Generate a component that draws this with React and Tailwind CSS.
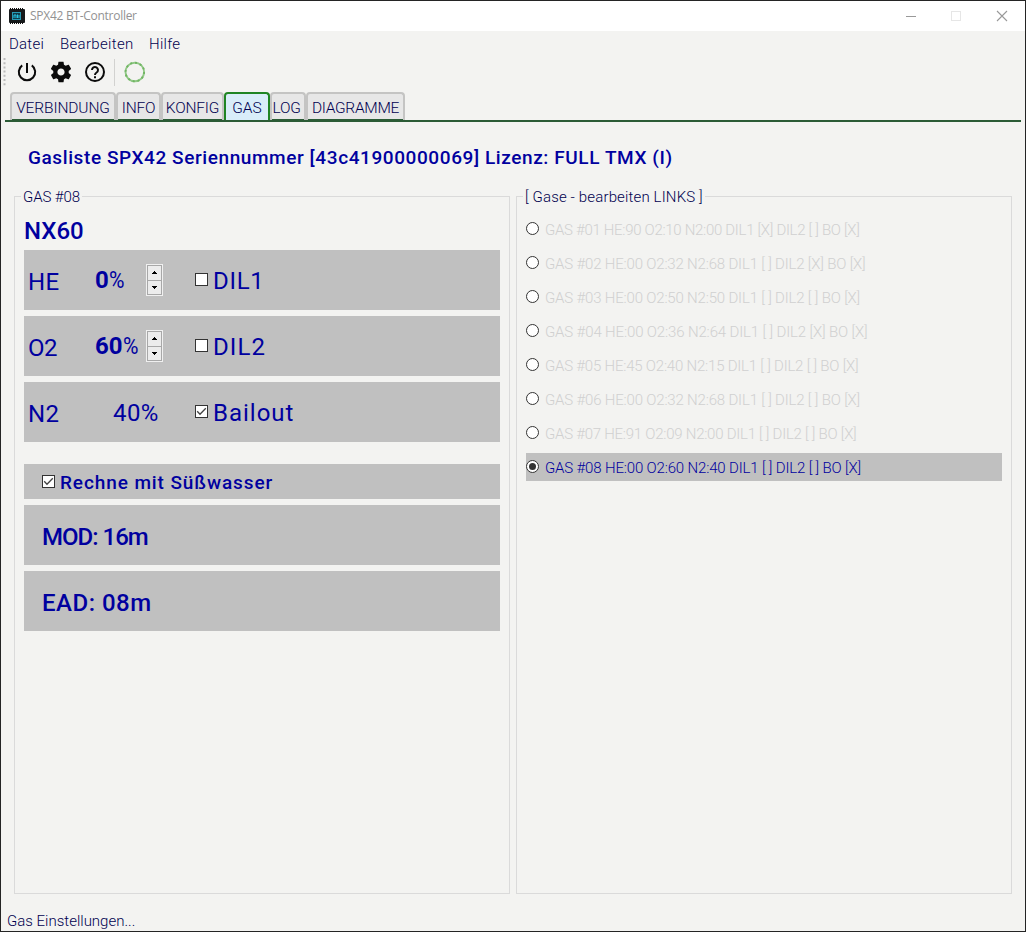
import React from 'react';

const gases = [
  ['GAS #01 HE:90 O2:10 N2:00 DIL1 [X] DIL2 [ ] BO [X]', 'tracking-[-0.3px]'],
  ['GAS #02 HE:00 O2:32 N2:68 DIL1 [ ] DIL2 [X] BO [X]', 'tracking-[-0.18px]'],
  ['GAS #03 HE:00 O2:50 N2:50 DIL1 [ ] DIL2 [ ] BO [X]', 'tracking-[-0.18px]'],
  ['GAS #04 HE:00 O2:36 N2:64 DIL1 [ ] DIL2 [X] BO [X]', 'tracking-[-0.14px]'],
  ['GAS #05 HE:45 O2:40 N2:15 DIL1 [ ] DIL2 [ ] BO [X]', 'tracking-[-0.21px]'],
  ['GAS #06 HE:00 O2:32 N2:68 DIL1 [ ] DIL2 [ ] BO [X]', 'tracking-[-0.18px]'],
  ['GAS #07 HE:91 O2:09 N2:00 DIL1 [ ] DIL2 [ ] BO [X]', 'tracking-[-0.25px]'],
  ['GAS #08 HE:00 O2:60 N2:40 DIL1 [ ] DIL2 [ ] BO [X]', 'tracking-[-0.16px]'],
];

const tabs = [
  ['VERBINDUNG', 'w-[106px]', 'tracking-[-0.12px]'],
  ['INFO', 'w-[45px]', 'tracking-[-0.2px]'],
  ['KONFIG', 'w-[63px]', 'tracking-[-0.2px]'],
  ['GAS', 'w-[46px]', 'tracking-[0px]'],
  ['LOG', 'w-[36px] pr-[3px]', 'tracking-[-0.3px]'],
  ['DIAGRAMME', 'w-[99px]', 'tracking-[-0.3px]'],
];

function Check({ on }) {
  return (
    <svg className="block h-[13px] w-[13px] shrink-0" viewBox="0 0 13 13">
      <rect x="0.5" y="0.5" width="12" height="12" fill="#fff" stroke="#333" />
      {on && <path d="M2.2 6.2 5 9.2 10.8 3.2" fill="none" stroke="#444" strokeWidth="1.3" />}
    </svg>
  );
}

function Radio({ on }) {
  return (
    <svg className="mt-[7px] block h-[13px] w-[13px] shrink-0" viewBox="0 0 13 13">
      <circle cx="6.5" cy="6.5" r="6" fill="#fff" stroke="#333" />
      {on && <circle cx="6.5" cy="6.5" r="3.5" fill="#333" />}
    </svg>
  );
}

function Spinner() {
  return (
    <svg className="block h-8 w-[17px]" viewBox="0 0 17 32">
      <rect width="17" height="32" fill="#f0f0f0" />
      <rect x="1.5" y="1.5" width="14" height="29" fill="#ececec" stroke="#a8a8a8" />
      <path d="M1 16.5H16" stroke="#a8a8a8" />
      <path d="M6 10V9H7V8H8V7H9V8H10V9H11V10Z M6 22H11V23H10V24H9V25H8V24H7V23H6Z" fill="#000" />
    </svg>
  );
}

function Group({ title, tracking, children }) {
  return (
    <fieldset className="h-[706px] w-[496px] min-w-0 border border-[#dadada] px-[9px]">
      <legend className={`-ml-[3px] h-4 px-0.5 text-[15px] leading-[18px] font-light whitespace-nowrap text-[#00004f] ${tracking}`}>{title}</legend>
      {children}
    </fieldset>
  );
}

function GasRow({ name, nameTracking, value, label, labelTracking, checked, spin }) {
  return (
    <div className="flex h-[60px] bg-[#c0c0c0]">
      <div className={`w-[71px] pt-[18px] pl-1 text-[24px] leading-7 ${nameTracking}`}>{name}</div>
      {spin ? (
        <div className="w-[51px] pt-4 text-[24px] leading-7 whitespace-nowrap">
          <b className="font-bold">{value}</b><span className="inline-block origin-left scale-x-[0.88]">%</span>
        </div>
      ) : (
        <div className="w-[51px] pt-[17px] pl-[18px] text-[24px] leading-7 tracking-[0.4px]">{value}%</div>
      )}
      <div className="w-[49px] pt-3.5">{spin && <Spinner />}</div>
      <div className="pt-[23px]"><Check on={checked} /></div>
      <div className={`pt-[17px] pl-[5px] text-[24px] leading-7 ${labelTracking}`}>{label}</div>
    </div>
  );
}

export default function App() {
  return (
    <div className="flex h-[932px] w-[1026px] flex-col overflow-hidden border border-[#242424] bg-[#f3f3f1] font-['Roboto',sans-serif] text-[#00009f]">
      <header className="flex h-[30px] shrink-0 items-center bg-white pl-2">
        <svg className="h-4 w-4" viewBox="0 0 16 16">
          <rect y="1" width="16" height="14" rx="1" fill="#171a1c" />
          <path d="M1 1H15M1 15H15" stroke="#111" strokeWidth="2" strokeDasharray="1 1" />
          <rect x="3.5" y="4.5" width="8" height="7" fill="#103e4c" stroke="#279bb5" />
          <path d="M5 10V7h2v3M8.5 10V6.5M10 10V7" stroke="#26c5e4" fill="none" />
        </svg>
        <span className="ml-[5px] font-['Open_Sans',sans-serif] text-[12px] leading-4 tracking-[-0.28px] text-[#929292]">SPX42 BT-Controller</span>
        <svg className="mr-[17px] ml-auto h-3 w-[104px]" viewBox="0 0 104 12" fill="none">
          <path d="M2 6.5H12" stroke="#999" />
          <rect x="47.5" y="1.5" width="9" height="9" stroke="#e6e6e6" />
          <path d="M93 1 103 11M103 1 93 11" stroke="#999" strokeWidth="1.1" />
        </svg>
      </header>

      <nav className="flex h-[25px] shrink-0 items-center pt-0.5 pl-2 text-[15px] font-light text-[#00004f]">
        <span className="w-[51px] tracking-[0.25px]">Datei</span>
        <span className="w-[89px] tracking-[0.32px]">Bearbeiten</span>
        <span className="tracking-[0.3px]">Hilfe</span>
      </nav>

      <div className="flex h-9 shrink-0 items-start pt-0.5">
        <svg className="h-[30px] w-[150px]" viewBox="1 58 150 30">
          <path d="M4.5 58V87" stroke="#bcbcbc" strokeWidth="2" strokeDasharray="2 2.2" />
          <g fill="none" stroke="#0b0b0b" strokeWidth="2">
            <path d="M27 63V73M22.2 65.4A8.2 8.2 0 1 0 31.8 65.4" />
            <circle cx="95" cy="72" r="9" />
            <path d="M92 70a3 3 0 1 1 4.6 2.5C95.4 73.3 95 73.7 95 75M95 76.3V78.3" />
          </g>
          <g transform="translate(48.6 59.6) scale(1.033)">
            <path fill="#0b0b0b" d="M19.43 12.98c.04-.32.07-.64.07-.98s-.03-.66-.07-.98l2.11-1.65c.19-.15.24-.42.12-.64l-2-3.46c-.12-.22-.39-.3-.61-.22l-2.49 1c-.52-.4-1.08-.73-1.69-.98l-.38-2.65C14.46 2.18 14.25 2 14 2h-4c-.25 0-.46.18-.49.42l-.38 2.65c-.61.25-1.17.59-1.69.98l-2.49-1c-.23-.09-.49 0-.61.22l-2 3.46c-.13.22-.07.49.12.64l2.11 1.65c-.04.32-.07.65-.07.98s.03.66.07.98l-2.11 1.65c-.19.15-.24.42-.12.64l2 3.46c.12.22.39.3.61.22l2.49-1c.52.4 1.08.73 1.69.98l.38 2.65c.03.24.24.42.49.42h4c.25 0 .46-.18.49-.42l.38-2.65c.61-.25 1.17-.59 1.69-.98l2.49 1c.23.09.49 0 .61-.22l2-3.46c.12-.22.07-.49-.12-.64l-2.11-1.65zM12 15.5c-1.93 0-3.5-1.57-3.5-3.5s1.57-3.5 3.5-3.5 3.5 1.57 3.5 3.5-1.57 3.5-3.5 3.5z" />
          </g>
          <path d="M114.5 59V86" stroke="#d2d2d0" />
          <circle cx="134.8" cy="72" r="9.3" fill="none" stroke="#90c785" strokeWidth="1.9" />
          <circle cx="134.8" cy="72" r="9.3" fill="none" stroke="#6fb562" strokeWidth="1.9" strokeDasharray="2 2.87" />
        </svg>
      </div>

      <div className="mx-1 flex h-[30px] shrink-0 border-b-2 border-[#2b5b36] pl-[5px]">
        {tabs.map(([t, w, tr]) => (
          <div
            key={t}
            className={`flex h-7 shrink-0 items-center justify-center rounded-t border-2 border-b-0 pt-1 text-[15.5px] font-light whitespace-nowrap text-[#00004f] ${w} ${tr} ${t === 'GAS' ? 'border-[#208524] bg-[#d9edf9]' : 'border-[#c4c4c3] bg-[#e7e7e7] shadow-[inset_0_-1px_0_#2b5b36]'}`}
          >
            {t}
          </div>
        ))}
      </div>

      <h1 className="mt-[22px] ml-[27px] h-7 shrink-0 text-[19px] leading-7 font-medium tracking-[0.59px] whitespace-nowrap">
        Gasliste SPX42 Seriennummer [43c41900000069] Lizenz: FULL TMX (I)
      </h1>

      <main className="mt-4 ml-[13px] flex shrink-0 gap-1.5">
        <Group title="GAS #08" tracking="tracking-[-0.1px]">
          <div className="mt-[13px] h-7 text-[24px] leading-7 font-medium">NX60</div>
          <div className="mt-[5px] flex flex-col gap-1.5">
            <GasRow name="HE" nameTracking="tracking-[0.3px]" value="0" label="DIL1" labelTracking="tracking-[0.7px]" spin />
            <GasRow name="O2" nameTracking="tracking-[-0.5px]" value="60" label="DIL2" labelTracking="tracking-[1.1px]" spin />
            <GasRow name="N2" nameTracking="tracking-[0.3px]" value="40" label="Bailout" labelTracking="tracking-[1px]" checked />
          </div>
          <div className="mt-[22px] flex h-[35px] items-center bg-[#c0c0c0] pl-[18px]">
            <Check on />
            <span className="pt-0.5 pl-[5px] text-[19px] leading-6 font-medium tracking-[0.9px]">Rechne mit Süßwasser</span>
          </div>
          <div className="mt-1.5 h-[60px] bg-[#c0c0c0] pt-[18px] pl-[18px] text-[24px] leading-7 font-medium tracking-[-1px]">MOD: 16m</div>
          <div className="mt-1.5 h-[60px] bg-[#c0c0c0] pt-[18px] pl-[18px] text-[24px] leading-7 font-medium tracking-[0.5px]">EAD: 08m</div>
        </Group>
        <Group title="[ Gase - bearbeiten LINKS ]" tracking="tracking-[0.15px]">
          <ul className="mt-[11px] flex flex-col gap-1.5">
            {gases.map(([t, tr], i) => (
              <li
                key={t}
                className={`flex h-7 items-start ${i === 7 ? 'bg-[#c0c0c0] text-[#00009f]' : 'text-[#d0d0d0]'}`}
              >
                <Radio on={i === 7} />
                <span className={`pt-[5px] pl-1.5 text-[15px] leading-5 font-light whitespace-nowrap ${tr}`}>{t}</span>
              </li>
            ))}
          </ul>
        </Group>
      </main>

      <footer className="mt-[17px] pl-1.5 text-[15px] leading-5 font-light text-[#00004f]">Gas Einstellungen...</footer>
    </div>
  );
}
